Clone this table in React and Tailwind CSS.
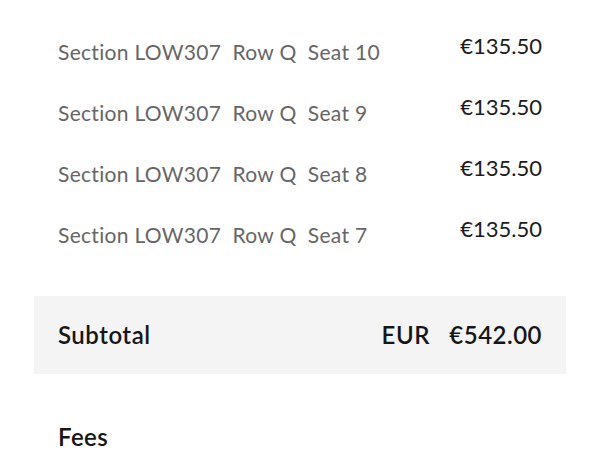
import React from "react";

const seats = ["10", "9", "8", "7"];

export default function App() {
  return (
    <div className="w-[600px] h-[450px] overflow-hidden bg-white px-[34px] pt-[32px]" style={{ fontFamily: "Lato, 'Open Sans', sans-serif" }}>
      <div className="px-6">
        {seats.map((s) => (
          <div key={s} className="flex h-[61px] items-start justify-between">
            <div className="pt-[6px] text-[21px] leading-[28px] tracking-[0.3px] text-[#666666] whitespace-pre">
              {`Section LOW307  Row Q  Seat ${s}`}
            </div>
            <div className="text-[22px] leading-[28px] text-[#1b1b1b]">€135.50</div>
          </div>
        ))}
      </div>

      <div className="mt-[20px] flex h-[78px] items-center justify-between bg-[#f4f4f4] px-6 text-[24px] font-semibold tracking-[0.5px] text-[#161616]">
        <span>Subtotal</span>
        <span className="whitespace-pre">{"EUR   €542.00"}</span>
      </div>

      <div className="mt-[49px] px-6 text-[24px] leading-[28px] font-semibold tracking-[0.4px] text-[#161616]">Fees</div>
    </div>
  );
}
